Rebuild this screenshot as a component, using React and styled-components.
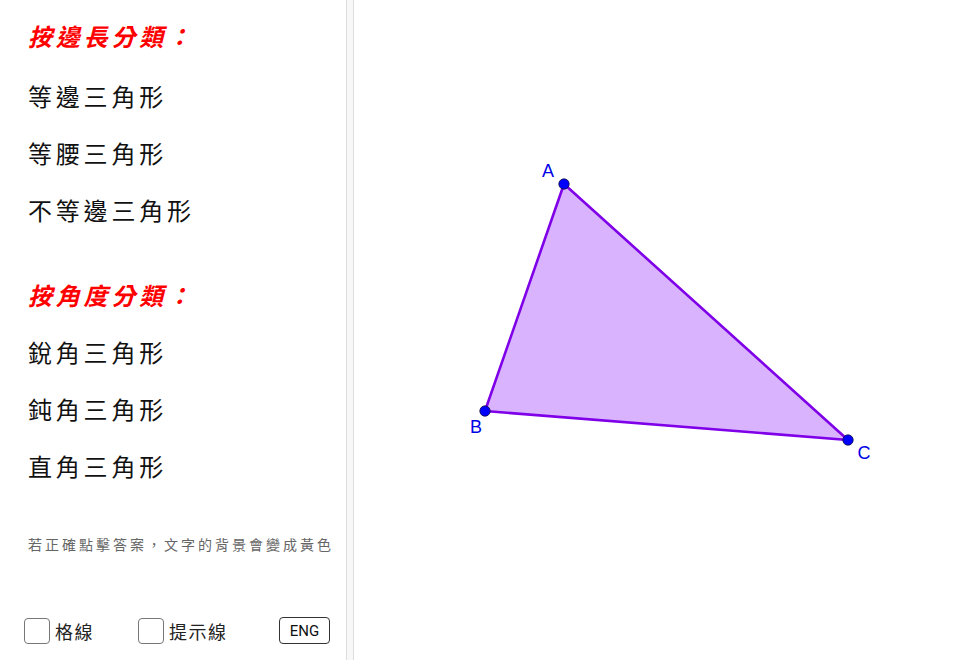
import React from 'react';
import styled, { createGlobalStyle } from 'styled-components';

const GlobalStyle = createGlobalStyle`
	html, body {
		margin: 0;
		padding: 0;
		background: #ffffff;
	}
	body {
		font-family: "Noto Sans CJK TC", "Noto Sans", sans-serif;
	}
`;

const Page = styled.div`
	display: flex;
	width: 960px;
	height: 660px;
	overflow: hidden;
`;

const SidePanel = styled.div`
	width: 346px;
	height: 660px;
	display: flex;
	flex-direction: column;
	padding: 10px 0 16px 28px;
	box-sizing: border-box;
`;

const Group = styled.div`
	display: flex;
	flex-direction: column;
	margin-bottom: ${(p) => p.gap || '0px'};
`;

const GroupTitle = styled.div`
	line-height: ${(p) => (p.first ? '51px' : '57px')};
	padding-bottom: ${(p) => (p.first ? '6px' : '0px')};
	font-size: 24px;
	letter-spacing: 3.8px;
	font-weight: bold;
	font-style: italic;
	color: #ff0000;
`;

const Answer = styled.div`
	line-height: 57px;
	font-size: 24px;
	letter-spacing: 3.8px;
	color: #111111;
	cursor: pointer;
`;

const Hint = styled.div`
	margin-top: 40px;
	line-height: 20px;
	font-size: 14px;
	letter-spacing: 3px;
	color: #666666;
	white-space: nowrap;
`;

const Controls = styled.div`
	margin-top: auto;
	display: flex;
	align-items: center;
	margin-left: -4px;
	padding-right: 16px;
`;

const CheckRow = styled.label`
	display: flex;
	align-items: center;
	gap: 5px;
	margin-right: ${(p) => p.space || '0px'};
`;

const Box = styled.span`
	width: 24px;
	height: 24px;
	border: 1px solid #777777;
	border-radius: 4px;
	background: #ffffff;
`;

const CheckLabel = styled.span`
	font-size: 18px;
	letter-spacing: 1.5px;
	color: #222222;
`;

const EngButton = styled.button`
	margin-left: auto;
	width: 51px;
	height: 27px;
	border: 1.5px solid #333333;
	border-radius: 4px;
	background: #ffffff;
	font-family: Roboto, "Liberation Sans", sans-serif;
	font-size: 15px;
	color: #111111;
	padding: 0;
`;

const Divider = styled.div`
	width: 6px;
	height: 660px;
	background: #f8f8f8;
	border-left: 1px solid #dddddd;
	border-right: 1px solid #dddddd;
`;

const Canvas = styled.div`
	flex: 1;
	height: 660px;
`;

const groups = [
	{ title: '按邊長分類：', items: ['等邊三角形', '等腰三角形', '不等邊三角形'], gap: '28px', first: true },
	{ title: '按角度分類：', items: ['銳角三角形', '鈍角三角形', '直角三角形'] },
];

const pts = {
	A: { x: 210, y: 184, lx: 194, ly: 177 },
	B: { x: 131, y: 411, lx: 122, ly: 433 },
	C: { x: 494, y: 440, lx: 510, ly: 459 },
};

const Triangle = () => {
	const poly = ['A', 'B', 'C'].map((k) => `${pts[k].x},${pts[k].y}`).join(' ');
	return (
		<svg width='606' height='660' viewBox='0 0 606 660'>
			<polygon points={poly} fill='#d9b3fd' stroke='#7f00e8' strokeWidth='2.6' strokeLinejoin='round' />
			{Object.keys(pts).map((k) => (
				<g key={k}>
					<circle cx={pts[k].x} cy={pts[k].y} r='5.2' fill='#0000ff' stroke='#101040' strokeWidth='0.8' />
					<text
						x={pts[k].lx}
						y={pts[k].ly}
						textAnchor='middle'
						fontFamily='"Liberation Sans", Arial, sans-serif'
						fontSize='18'
						fill='#0000e6'
					>
						{k}
					</text>
				</g>
			))}
		</svg>
	);
};

const App = () => {
	return (
		<Page>
			<GlobalStyle />
			<SidePanel>
				{groups.map((g) => (
					<Group key={g.title} gap={g.gap}>
						<GroupTitle first={g.first}>{g.title}</GroupTitle>
						{g.items.map((item) => (
							<Answer key={item}>{item}</Answer>
						))}
					</Group>
				))}
				<Hint>若正確點擊答案，文字的背景會變成黃色</Hint>
				<Controls>
					<CheckRow space='44px'>
						<Box />
						<CheckLabel>格線</CheckLabel>
					</CheckRow>
					<CheckRow>
						<Box />
						<CheckLabel>提示線</CheckLabel>
					</CheckRow>
					<EngButton>ENG</EngButton>
				</Controls>
			</SidePanel>
			<Divider />
			<Canvas>
				<Triangle />
			</Canvas>
		</Page>
	);
};

export default App;
